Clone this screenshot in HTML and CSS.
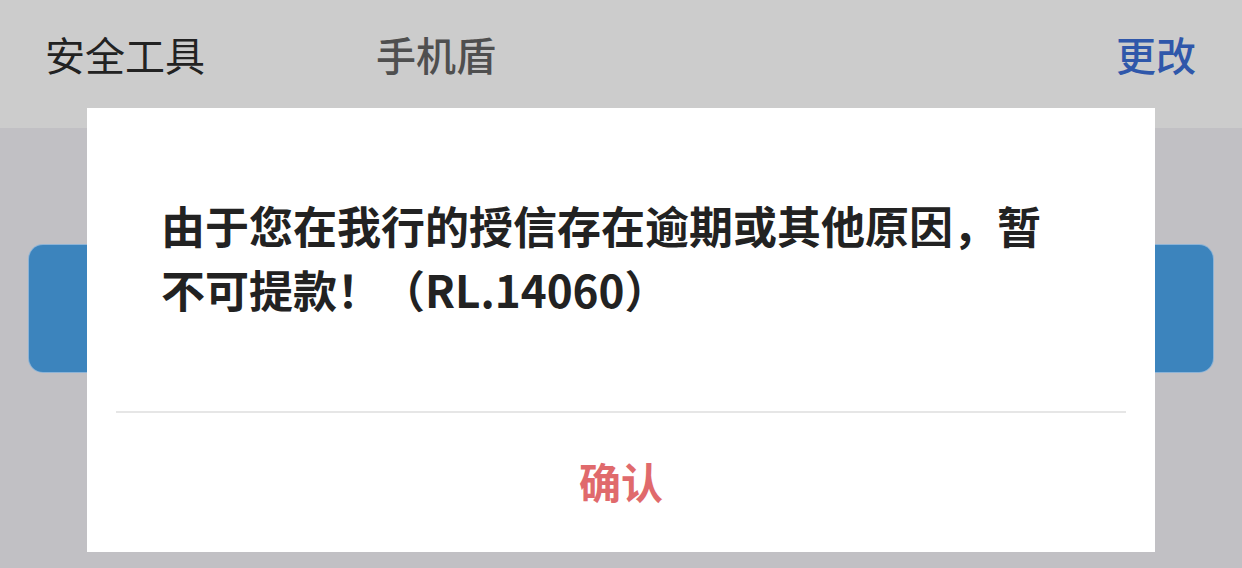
FILE: index.html
```html
<!DOCTYPE html>
<html lang="zh-CN">
<head>
	<meta charset="UTF-8">
	<title>提款</title>
	<link rel="stylesheet" href="styles.css">
</head>
<body>
	<header class="topbar">
		<span class="label">安全工具</span>
		<span class="value">手机盾</span>
		<a class="change">更改</a>
	</header>

	<div class="action"></div>

	<!-- alert dialog -->
	<div class="dialog">
		<p class="msg">由于您在我行的授信存在逾期或其他原因，暂不可提款！（RL.14060）</p>
		<div class="line"></div>
		<div class="ok">确认</div>
	</div>
</body>
</html>
```

FILE: styles.css
```css
body{
	margin: 0;
	width: 1242px;
	height: 568px;
	overflow: hidden;
	background: #c1c0c4;
	font-family: "Noto Sans CJK SC", "Noto Sans", sans-serif;
	position: relative;
}

.topbar{
	height: 128px;
	background: #cccccc;
	display: flex;
	align-items: flex-start;
	padding: 26px 46px 0 45px;
	box-sizing: border-box;
	font-size: 40px;
	line-height: 56px;
}

.label{
	color: #222;
	width: 331px;
}

.value{
	color: #4f4f4f;
	font-weight: 500;
}

.change{
	color: #2f57aa;
	font-weight: 500;
	margin-left: auto;
}

.action{
	margin: 117px 29px 0 29px;
	height: 127px;
	border-radius: 14px;
	background: #3c84bd;
	box-shadow: 0 0 0 1px #8db3d6;
}

.dialog{
	position: absolute;
	left: 87px;
	top: 108px;
	width: 1068px;
	height: 444px;
	background: #fff;
	display: flex;
	flex-direction: column;
}

.msg{
	margin: 0;
	padding: 85px 90px 0 74px;
	box-sizing: border-box;
	font-size: 44px;
	line-height: 64px;
	font-weight: 700;
	color: #222;
	height: 216px;
}

.line{
	margin: 87px 29px 0 29px;
	height: 2px;
	background: #e6e6e6;
}

.ok{
	flex: 1;
	display: flex;
	align-items: center;
	justify-content: center;
	font-size: 42px;
	font-weight: 700;
	color: #e06a6c;
	padding-bottom: 4px;
}
```
